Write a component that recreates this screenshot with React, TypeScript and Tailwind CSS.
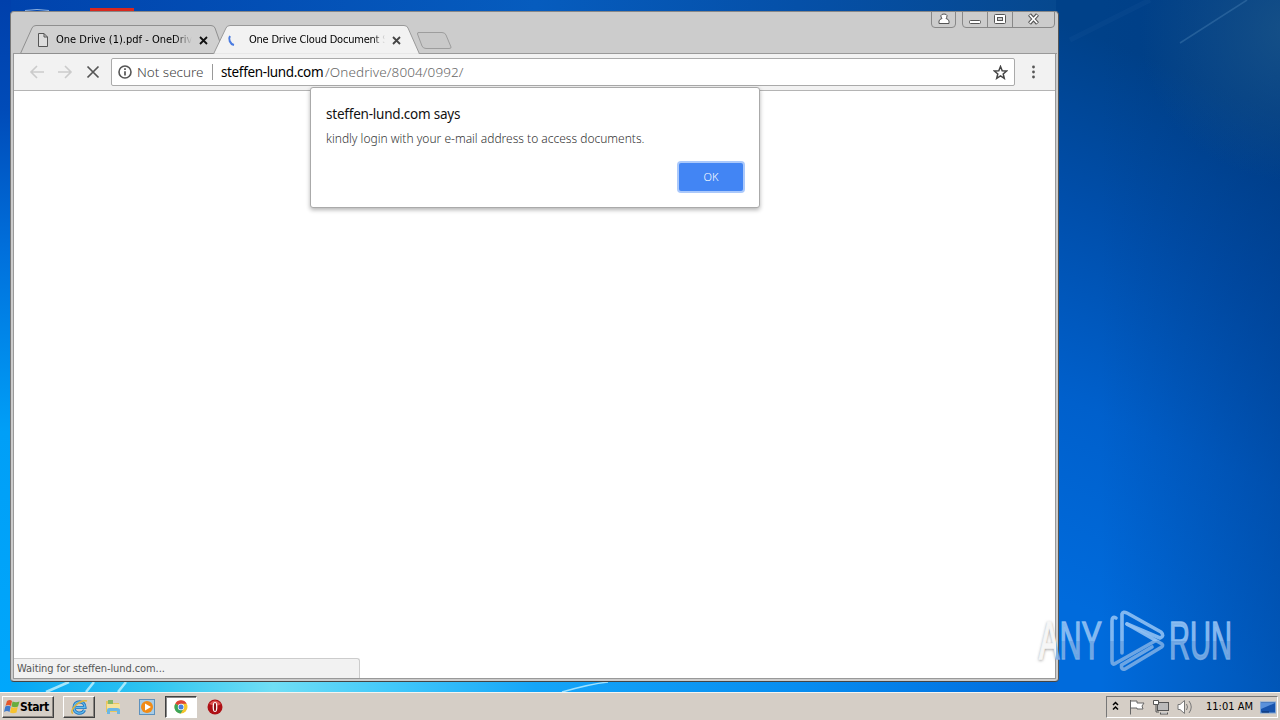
import type { ReactNode } from "react";

function Wallpaper() {
  return (
    <svg className="absolute inset-0" width="1280" height="720" viewBox="0 0 1280 720" aria-hidden="true">
      <defs>
        <linearGradient id="left" x1="0" y1="0" x2="0" y2="1">
          <stop offset="0" stopColor="#0040ab" />
          <stop offset="0.15" stopColor="#004bb8" />
          <stop offset="0.35" stopColor="#0070dc" />
          <stop offset="0.6" stopColor="#009ff7" />
          <stop offset="1" stopColor="#00a8fc" />
        </linearGradient>
        <linearGradient id="top" x1="0" y1="0" x2="1" y2="0">
          <stop offset="0" stopColor="#0043ad" />
          <stop offset="0.5" stopColor="#065cbe" />
          <stop offset="0.75" stopColor="#0550a8" />
          <stop offset="1" stopColor="#06488e" />
        </linearGradient>
        <linearGradient id="bottom" x1="0" y1="0" x2="1" y2="0">
          <stop offset="0" stopColor="#05a6f5" />
          <stop offset="0.13" stopColor="#2ec4f0" />
          <stop offset="0.25" stopColor="#70def5" />
          <stop offset="0.36" stopColor="#43c9fa" />
          <stop offset="0.5" stopColor="#15a5f8" />
          <stop offset="0.75" stopColor="#078df0" />
          <stop offset="1" stopColor="#0069dc" />
        </linearGradient>
        <linearGradient id="right" gradientUnits="userSpaceOnUse" x1="1060" y1="600" x2="1270" y2="110">
          <stop offset="0" stopColor="#006bdc" />
          <stop offset="0.35" stopColor="#0060cc" />
          <stop offset="0.7" stopColor="#004eaa" />
          <stop offset="1" stopColor="#004189" />
        </linearGradient>
        <linearGradient id="shade" x1="0" y1="0" x2="1" y2="0">
          <stop offset="0.2" stopColor="#00347c" stopOpacity="0" />
          <stop offset="1" stopColor="#00347c" stopOpacity="0.38" />
        </linearGradient>
        <radialGradient id="glow" gradientUnits="userSpaceOnUse" cx="1290" cy="30" r="150">
          <stop offset="0" stopColor="#1c5688" stopOpacity="0.75" />
          <stop offset="1" stopColor="#1c5688" stopOpacity="0" />
        </radialGradient>
      </defs>
      <rect width="1280" height="720" fill="url(#left)" />
      <rect x="11" width="1049" height="12" fill="url(#top)" />
      <rect x="11" y="680" width="1049" height="14" fill="url(#bottom)" />
      <rect x="1056" width="224" height="694" fill="url(#right)" />
      <rect x="1056" width="224" height="694" fill="url(#shade)" />
      <rect x="1056" width="224" height="694" fill="url(#glow)" />
      <path d="M1180 43 1247 0" stroke="#3f78ad" strokeWidth="1.500" opacity="0.5" />
      <path d="M1070 40 1150 0" stroke="#2b67a6" strokeWidth="5" opacity="0.12" />
      <path d="M25 10.500Q37 8.500 49 10.500" stroke="#8eb2e0" fill="none" />
      <rect x="90" y="8" width="44" height="3" fill="#d9281e" />
      <path d="M46 692 69 682M86 692 94 682M118 692 126 682" stroke="#c7f4ff" strokeWidth="2.500" opacity="0.8" />
      <path d="M562 692Q590 684 608 682" stroke="#9fe2ff" strokeWidth="1.500" fill="none" />
    </svg>
  );
}

function Watermark() {
  return (
    <svg className="pointer-events-none absolute left-[1030px] top-[600px]" width="230" height="80" viewBox="1030 600 230 80">
      <defs>
        <linearGradient id="wm" gradientUnits="userSpaceOnUse" x1="0" y1="610" x2="0" y2="671">
          <stop offset="0.5" stopColor="#8fc0f3" stopOpacity="0.9" />
          <stop offset="0.51" stopColor="#7fb0e6" stopOpacity="0.85" />
        </linearGradient>
        <filter id="soft" x="-20%" y="-20%" width="140%" height="140%">
          <feGaussianBlur stdDeviation="1.600" />
        </filter>
        <clipPath id="page"><rect x="1030" y="600" width="26" height="80" /></clipPath>
        <clipPath id="desk"><rect x="1056" y="600" width="200" height="80" /></clipPath>
      </defs>
      <g fontFamily="'Liberation Sans Narrow','Liberation Sans',sans-serif" fontSize="53">
        <g clipPath="url(#page)">
          <text x="1039" y="660" textLength="63" lengthAdjust="spacingAndGlyphs" fill="#999" stroke="#999" filter="url(#soft)">ANY</text>
          <text x="1039" y="659" textLength="63" lengthAdjust="spacingAndGlyphs" fill="#f6f6f6" stroke="#f6f6f6" strokeWidth="1.500" aria-hidden="true">ANY</text>
        </g>
        <g clipPath="url(#desk)">
          <text x="1039" y="659" textLength="63" lengthAdjust="spacingAndGlyphs" fill="url(#wm)" stroke="url(#wm)" strokeWidth="1.500" aria-hidden="true">ANY</text>
        </g>
        <text x="1169" y="659" textLength="63" lengthAdjust="spacingAndGlyphs" fill="url(#wm)" stroke="url(#wm)" strokeWidth="1.500">RUN</text>
      </g>
      <g fill="none" stroke="url(#wm)" strokeWidth="3.600" strokeLinejoin="round" strokeLinecap="round">
        <path d="M1116 618Q1112 616 1112 621V661Q1112 666 1116 663L1155 641" />
        <path d="M1122 653V614Q1123 611 1127 613L1161 632Q1165 636 1160 638L1127 624" />
        <path d="M1127 624 1162 644Q1164 646 1160 648L1125 669Q1121 670 1121.500 665L1152 647" />
      </g>
    </svg>
  );
}

function CloseX({ color = "#222" }: { color?: string }) {
  return (
    <svg width="9" height="9" viewBox="0 0 9 9"><path d="m1 1 7 7M8 1 1 8" stroke={color} strokeWidth="1.800" /></svg>
  );
}

function TitleBar() {
  return (
    <div className="relative h-[42px] shrink-0">
      <svg className="absolute inset-0" width="1044" height="42" viewBox="13 12 1044 42" aria-hidden="true">
        <path d="M13 53.500H1057" stroke="#999" />
        <path d="M20.500 53.500 32 28Q33 25.500 36 25.500H211Q214 25.500 215 28L224 53.500Z" fill="#d0d0d0" stroke="#8f8f8f" />
        <path d="M213.500 54 226 28Q227 25.500 230 25.500H404Q407 25.500 408 28L419.500 54Z" fill="#f2f2f2" stroke="#999" />
        <path d="M214.500 54H418.500" stroke="#f2f2f2" strokeWidth="1.500" />
        <path d="M418 32.500H442Q445 32.500 446 35L451 47Q451.500 48.500 449 48.500H426Q423 48.500 422 46L417.500 34Q417 32.500 419 32.500Z" fill="#c9c9c9" stroke="#9d9d9d" />
        <g fill="none" stroke="#888">
          <path d="M931.500 12V24Q931.500 27.500 935 27.500H952Q955.500 27.500 955.500 24V12" />
          <path d="M962.500 12V24Q962.500 27.500 966 27.500H1051Q1054.500 27.500 1054.500 24V12M987.500 12V27M1012.500 12V27" />
        </g>
        <g fill="#fff" stroke="#555">
          <path d="M939 23.500V21Q939.500 19 942 18.500 940.500 17 941 15.500 941.500 14 944 14T947 15.500Q947 17.500 946 18.500 948.500 19 949 21V23.500Z" />
          <rect x="969.500" y="20.500" width="11" height="3" rx="1" />
          <rect x="994.500" y="14.500" width="11" height="9" rx="1" />
          <rect x="997.500" y="17.500" width="5" height="3" fill="#ccc" />
        </g>
        <path d="m1029.500 14.500 8 9m0-9-8 9" stroke="#555" strokeWidth="4" />
        <path d="m1029.800 15 7.400 8m0-8-7.400 8" stroke="#fff" strokeWidth="1.800" />
      </svg>
      <div className="relative flex h-full items-start pt-[21px] text-[11px] leading-[14px] text-black">
        <div className="flex w-[195px] items-center pl-[25px]">
          <svg width="10" height="14" viewBox="0 0 10 14"><path d="M.5.500H6L9.500 4V13.500H.5ZM6 .5V4H9.500" fill="#ddd" stroke="#555" /></svg>
          <span className="ml-[8px] w-[136px] overflow-hidden whitespace-nowrap bg-gradient-to-r from-black from-85% to-[#d0d0d0] bg-clip-text text-transparent">One Drive (1).pdf - OneDrive</span>
          <span className="ml-[7px]"><CloseX color="#111" /></span>
        </div>
        <div className="flex items-center pl-[19px]">
          <svg width="9" height="12" viewBox="0 0 9 12"><path d="M3 2C1 5 3 10 7 11" fill="none" stroke="#4a7be0" strokeWidth="2" /></svg>
          <span className="ml-[13px] w-[136px] overflow-hidden whitespace-nowrap bg-gradient-to-r from-black from-90% to-[#f2f2f2] bg-clip-text tracking-[-0.22px] text-transparent">One Drive Cloud Document S</span>
          <span className="ml-[7px]"><CloseX color="#444" /></span>
        </div>
      </div>
    </div>
  );
}

function Toolbar() {
  return (
    <div className="flex h-[37px] shrink-0 items-center border-b border-[#b4b4b4] bg-[#f2f2f2] pl-[15px]">
      <svg width="72" height="16" viewBox="29 64 72 16" fill="none">
        <path d="M44 72H31M37 66l-6 6 6 6M58 72H71M65 66l6 6-6 6" stroke="#cbcbcb" strokeWidth="1.600" />
        <path d="m87.500 66.500 11 11m0-11-11 11" stroke="#555" strokeWidth="1.700" />
      </svg>
      <div className="ml-[10px] flex h-[28px] w-[904px] items-center rounded-[2px] border border-[#aaa] bg-white pl-[6px] font-['Noto_Sans'] text-[13.5px] font-light">
        <svg width="14" height="14" viewBox="0 0 14 14"><circle cx="7" cy="7" r="6" fill="none" stroke="#555" strokeWidth="1.600" /><path d="M7 3.300V5M7 6.200V10.500" stroke="#555" strokeWidth="1.700" /></svg>
        <span className="ml-[5px] w-[67px] whitespace-nowrap tracking-[-0.02px] text-[#444]">Not secure</span>
        <span className="ml-[8px] h-4 w-px bg-[#999]" />
        <span className="ml-[8px] w-[103px] whitespace-nowrap font-normal tracking-[-0.36px] text-black">steffen-lund.com</span>
        <span className="ml-[1px] flex-1 whitespace-nowrap tracking-[0.1px] text-[#666]">/Onedrive/8004/0992/</span>
        <svg className="mr-[6px]" width="15" height="15" viewBox="0 0 15 15"><path d="m7.500 1.500 1.700 4.200 4.400.3-3.400 2.900 1.100 4.400-3.800-2.400-3.800 2.400 1.100-4.400L1.400 6l4.400-.3Z" fill="none" stroke="#444" strokeWidth="1.500" /></svg>
      </div>
      <svg className="ml-[16px]" width="5" height="16" viewBox="0 0 5 16" fill="#555"><circle cx="2.500" cy="3" r="1.400" /><circle cx="2.500" cy="8" r="1.400" /><circle cx="2.500" cy="13" r="1.400" /></svg>
    </div>
  );
}

function Dialog() {
  return (
    <div className="absolute left-[310px] top-[87px] flex h-[121px] w-[450px] flex-col rounded-[3px] border border-[#aaa] bg-white pl-[15px] pr-[16px] pt-[16px] font-['Noto_Sans'] shadow-[0_2px_4px_rgba(0,0,0,0.3)]">
      <div className="whitespace-nowrap text-[13.5px] leading-[20px] tracking-[-0.22px] text-[#111]">steffen-lund.com says</div>
      <div className="mt-[6px] whitespace-nowrap text-[12px] font-light leading-[18px] text-[#333]">kindly login with your e-mail address to access documents.</div>
      <button className="mt-[15px] h-[28px] w-[64px] self-end rounded-[2px] bg-[#4285f4] text-[11px] font-light text-white shadow-[0_0_0_2px_#abc9fb]">OK</button>
    </div>
  );
}

function TaskItem({ children, className = "" }: { children: ReactNode; className?: string }) {
  return <div className={"flex h-[22px] w-[32px] items-center justify-center " + className}>{children}</div>;
}

function Taskbar() {
  return (
    <div className="absolute bottom-0 left-0 flex h-[28px] w-full items-center border-t border-[#f6f4f0] bg-[#d5cec6] pl-[2px] pr-[2px] pt-[1px]">
      <div className="flex h-[22px] w-[52px] items-center border border-b-[#404040] border-l-white border-r-[#404040] border-t-white bg-[#d5cec6] shadow-[inset_-1px_-1px_#8a8580]">
        <svg className="ml-[1px]" width="16" height="16" viewBox="0 0 16 16">
          <path d="M3 2Q6 0 8 2L7 7Q4 5 1.500 7Z" fill="#e4562c" /><path d="M8.500 2.500Q12 4 15.500 2.500L14 7.500Q11 9 7.500 7.500Z" fill="#69ad3e" />
          <path d="M1.300 7.500Q4 6 6.700 7.500L5.500 13Q3 11 0 13Z" fill="#3d79cc" /><path d="M7.300 8Q10 9.500 13.700 8L12.500 13.500Q9 15 6 13.500Z" fill="#f7c22f" />
        </svg>
        <span className="text-[12px] font-bold tracking-[-0.4px] text-black">Start</span>
      </div>
      <TaskItem className="ml-[9px] border border-b-[#404040] border-l-white border-r-[#404040] border-t-white shadow-[inset_-1px_-1px_#8a8580]">
        <svg width="18" height="16" viewBox="0 0 18 16" fill="none"><path d="M14.500 11C12 16 4 15 4 8.500 4 1 15 1 15 8.500H6" stroke="#2675bd" strokeWidth="3.200" /><path d="M14.500 11C12 16 4 15 4 8.500 4 1 15 1 15 8.500H6" stroke="#61bef0" strokeWidth="1.300" /><path d="M3 14.500C-2 12 10 0 17 2" stroke="#e3b63a" strokeWidth="1.400" /></svg>
      </TaskItem>
      <TaskItem className="ml-[2px]">
        <svg width="16" height="16" viewBox="0 0 16 16"><path d="M1 2H6L7 4H14V13H1Z" fill="#e8c65d" /><path d="M3 1H8V6H3Z" fill="#86b867" /><path d="M2 5H15V12H2Z" fill="#f5e39b" /><path d="M2 15V11Q2 9 4 9H12Q15 9 15 11V15H12V12H5V15Z" fill="#6bb7e4" /></svg>
      </TaskItem>
      <TaskItem className="ml-[2px]">
        <svg width="16" height="16" viewBox="0 0 16 16"><rect x=".5" y=".5" width="15" height="15" fill="#a8cce6" stroke="#5d91bd" /><circle cx="8" cy="8" r="6" fill="#f18b16" /><path d="M6 4.500 12 8 6 11.500Z" fill="#fff" /></svg>
      </TaskItem>
      <TaskItem className="ml-[2px] border border-b-white border-l-[#404040] border-r-white border-t-[#404040] bg-white shadow-[inset_1px_1px_#888]">
        <svg width="14" height="14" viewBox="0 0 14 14"><circle cx="7" cy="7" r="6.500" fill="#f5c52c" /><path d="M7 7 1.300 3.700A6.500 6.500 0 0 1 12.700 3.800H7Z" fill="#dc4437" /><path d="M7 7 1.300 3.700A6.500 6.500 0 0 0 6.700 13.500L9.700 8.500Z" fill="#3ba55a" /><circle cx="7" cy="7" r="3.200" fill="#fff" /><circle cx="7" cy="7" r="2.500" fill="#477fdc" /></svg>
      </TaskItem>
      <TaskItem className="ml-[2px]">
        <svg width="16" height="16" viewBox="0 0 16 16"><circle cx="8" cy="8" r="7.500" fill="#ae1015" /><path d="M2 5Q8-2 14 5Q10 8 2 5Z" fill="#df5653" /><ellipse cx="8" cy="8" rx="2.400" ry="5" fill="#fff" /><ellipse cx="8" cy="8" rx="1.100" ry="4.300" fill="#8c1114" /></svg>
      </TaskItem>
      <div className="ml-auto flex h-[22px] w-[172px] items-center border border-b-white border-l-[#777] border-r-white border-t-[#777] pl-[5px]">
        <svg width="80" height="18" viewBox="1112 698 80 18" fill="none">
          <path d="m1113 705 2.500-2.500 2.500 2.500m-5 4.500 2.500-2.500 2.500 2.500" stroke="#000" strokeWidth="1.500" />
          <path d="M1130.500 700V714.500M1131 701H1137V703H1144L1142 706 1143 709H1137V708H1131" fill="#fff" stroke="#666" />
          <rect x="1157.500" y="702.500" width="11" height="8" fill="#bbb" stroke="#555" /><path d="M1160 713.500H1168" stroke="#555" strokeWidth="2" /><path d="M1153.500 700.500H1158.500V704.500H1153.500Z" fill="#fff" stroke="#555" /><path d="M1156 704V712H1159" stroke="#555" /><path d="M1161 713H1167" stroke="#fff" />
          <path d="M1178 704.500H1180L1184.500 700.500V713.500L1180 709.500H1178Z" fill="#fff" stroke="#777" /><path d="M1186.500 704Q1188.500 707 1186.500 710M1189 701Q1193.500 707 1189 713" stroke="#777" />
        </svg>
        <span className="ml-[14px] w-[47px] whitespace-nowrap pt-px text-[11px] text-black">11:01 AM</span>
        <svg className="ml-[7px]" width="16" height="14" viewBox="0 0 16 14"><rect x=".5" y="2" width="15" height="11" fill="#1854ad" stroke="#7fa6d7" /><path d="M1 3H15L1 9Z" fill="#5a91db" /><path d="M2 12H9" stroke="#0b2e67" /></svg>
      </div>
    </div>
  );
}

export default function App() {
  return (
    <main className="relative h-[720px] w-[1280px] overflow-hidden font-['DejaVu_Sans_Condensed','DejaVu_Sans',sans-serif]">
      <Wallpaper />
      <section className="absolute left-[10px] top-[11px] flex h-[671px] w-[1049px] flex-col rounded-[4px] border border-b-[#444] border-l-[#777] border-r-[#555] border-t-[#888] bg-[#ccc] px-[2px] pb-[2px]">
        <TitleBar />
        <div className="flex min-h-0 flex-1 flex-col border-b border-l border-r border-[#999] bg-white">
          <Toolbar />
          <div className="flex flex-1 items-end">
            <div className="flex h-[20px] w-[346px] items-center rounded-tr-[3px] border-r border-t border-[#ccc] bg-[#f2f2f2] pl-[3px] pt-px text-[11px] tracking-[-0.08px] text-[#555]">Waiting for steffen-lund.com...</div>
          </div>
        </div>
      </section>
      <Dialog />
      <Watermark />
      <Taskbar />
    </main>
  );
}
